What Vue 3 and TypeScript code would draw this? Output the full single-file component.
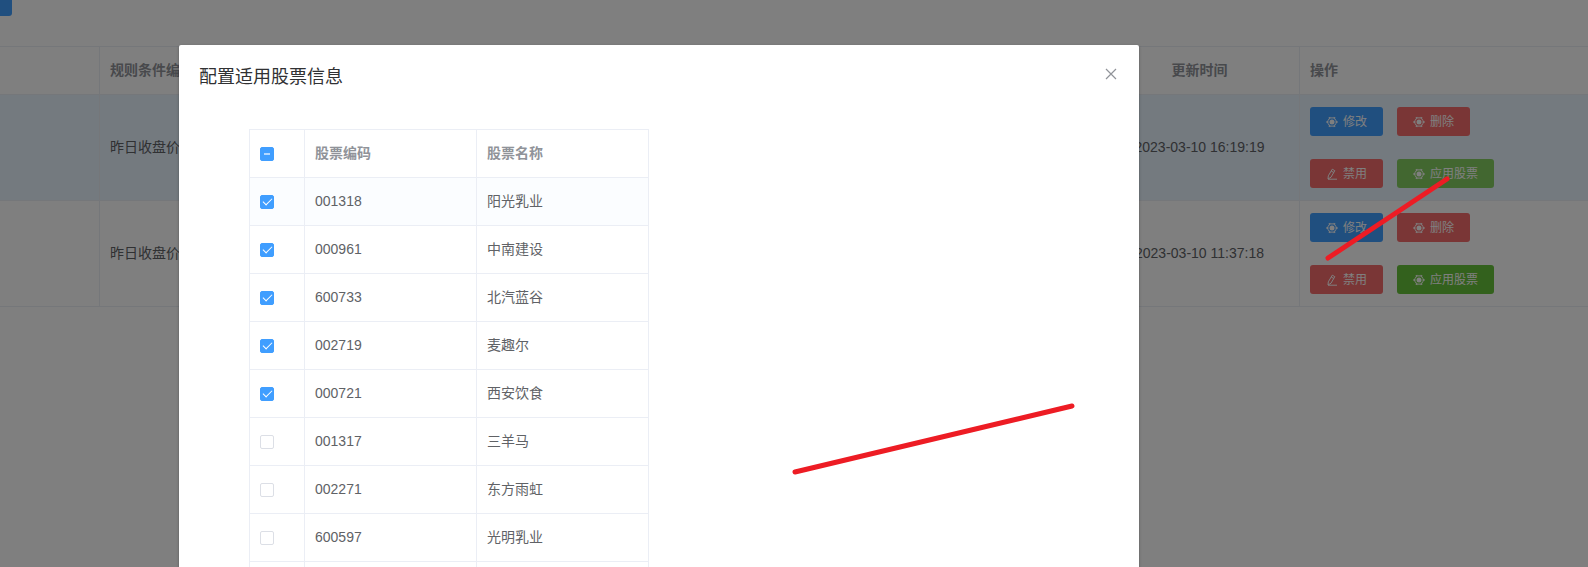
<script setup lang="ts">
import { ref, computed } from 'vue'

interface Action {
  label: string
  kind: 'primary' | 'danger' | 'success'
  icon: 'gear' | 'edit'
}

interface Rule {
  name: string
  updated: string
  current: boolean
}

interface Stock {
  code: string
  name: string
  checked: boolean
}

const actionRows: Action[][] = [
  [
    { label: '修改', kind: 'primary', icon: 'gear' },
    { label: '删除', kind: 'danger', icon: 'gear' },
  ],
  [
    { label: '禁用', kind: 'danger', icon: 'edit' },
    { label: '应用股票', kind: 'success', icon: 'gear' },
  ],
]

const rules = ref<Rule[]>([
  { name: '昨日收盘价', updated: '2023-03-10 16:19:19', current: true },
  { name: '昨日收盘价', updated: '2023-03-10 11:37:18', current: false },
])

const stocks = ref<Stock[]>([
  { code: '001318', name: '阳光乳业', checked: true },
  { code: '000961', name: '中南建设', checked: true },
  { code: '600733', name: '北汽蓝谷', checked: true },
  { code: '002719', name: '麦趣尔', checked: true },
  { code: '000721', name: '西安饮食', checked: true },
  { code: '001317', name: '三羊马', checked: false },
  { code: '002271', name: '东方雨虹', checked: false },
  { code: '600597', name: '光明乳业', checked: false },
  { code: '', name: '', checked: false },
])

const allChecked = computed(() => stocks.value.every((s) => s.checked))
const someChecked = computed(() => !allChecked.value && stocks.value.some((s) => s.checked))

function toggleAll(event: Event) {
  const on = (event.target as HTMLInputElement).checked
  stocks.value.forEach((s) => (s.checked = on))
}
</script>

<template>
  <div class="page">
    <div class="toolbar">
      <button type="button" class="tool" aria-label="新增"></button>
    </div>

    <table class="rules">
      <colgroup>
        <col class="c-first" />
        <col />
        <col class="c-time" />
        <col class="c-ops" />
      </colgroup>
      <thead>
        <tr>
          <th></th>
          <th>规则条件编码</th>
          <th class="time">更新时间</th>
          <th>操作</th>
        </tr>
      </thead>
      <tbody>
        <tr v-for="(rule, i) in rules" :key="i" :class="{ current: rule.current }">
          <td></td>
          <td>{{ rule.name }}</td>
          <td class="time">{{ rule.updated }}</td>
          <td>
            <div class="ops">
              <div v-for="(row, r) in actionRows" :key="r" class="pair">
                <button
                  v-for="action in row"
                  :key="action.label"
                  type="button"
                  class="btn"
                  :class="[action.kind, { focused: rule.current }]"
                >
                  <svg class="icon" viewBox="0 0 12 12" aria-hidden="true">
                    <template v-if="action.icon === 'gear'">
                      <circle cx="6" cy="6" r="4.2" class="ring" />
                      <path
                        d="M.5 6h1.300M10.200 6h1.300M3.250 1.240l.65 1.120M8.750 1.240l-.65 1.120M3.250 10.760l.65-1.120M8.750 10.760l-.65-1.120"
                        class="tooth"
                      />
                      <circle cx="6" cy="6" r="2.500" class="dot" />
                    </template>
                    <path
                      v-else
                      d="M6.300 1.200L8.800 2.700L5 9.200L2 11L2.300 7.800zM5.200 3L7.800 4.500M2 11.200h9"
                      class="ring"
                    />
                  </svg>
                  <span>{{ action.label }}</span>
                </button>
              </div>
            </div>
          </td>
        </tr>
      </tbody>
    </table>

    <div class="mask">
      <section class="dialog" role="dialog" aria-labelledby="dialog-title">
        <header class="dialog-head">
          <h2 id="dialog-title">配置适用股票信息</h2>
          <button type="button" class="close" aria-label="关闭">
            <svg viewBox="0 0 16 16" aria-hidden="true">
              <path d="M3 3l10 10M13 3L3 13" />
            </svg>
          </button>
        </header>
        <table class="stocks">
          <colgroup>
            <col class="c-check" />
            <col />
            <col />
          </colgroup>
          <thead>
            <tr>
              <th>
                <input
                  type="checkbox"
                  aria-label="全选"
                  :checked="allChecked"
                  :indeterminate="someChecked"
                  @change="toggleAll"
                />
              </th>
              <th>股票编码</th>
              <th>股票名称</th>
            </tr>
          </thead>
          <tbody>
            <tr v-for="(stock, i) in stocks" :key="i" :class="{ tinted: i === 0 }">
              <td><input v-model="stock.checked" type="checkbox" :aria-label="stock.name" /></td>
              <td>{{ stock.code }}</td>
              <td>{{ stock.name }}</td>
            </tr>
          </tbody>
        </table>
      </section>
    </div>

    <svg class="marks" aria-hidden="true">
      <path d="M1328 258L1447 179M795 472L1072 406" />
    </svg>
  </div>
</template>

<style>
html,
body,
#app {
  height: 100%;
  overflow: hidden;
}
</style>

<style scoped>
.page {
  position: relative;
  height: 100%;
  overflow: hidden;
  background: #fff;
  color: #606266;
  font-family: 'Liberation Sans', 'Noto Sans CJK SC', sans-serif;
  font-size: 14px;
}

.toolbar {
  height: 46px;
}

.tool {
  display: block;
  width: 12px;
  height: 16px;
  padding: 0;
  border: 0;
  border-radius: 0 0 3px 0;
  background: #409eff;
}

table {
  border-collapse: separate;
  border-spacing: 0;
  table-layout: fixed;
}

th,
td {
  box-sizing: border-box;
  padding: 0 10px;
  border-right: 1px solid #ebeef5;
  border-bottom: 1px solid #ebeef5;
  line-height: 23px;
  text-align: left;
  white-space: nowrap;
  overflow: hidden;
}

th {
  height: 48px;
  color: #909399;
  font-weight: 700;
}

.rules {
  width: 100%;
  border-top: 1px solid #ebeef5;
}

.rules td {
  height: 106px;
}

.rules th:last-child,
.rules td:last-child {
  border-right: 0;
}

.rules .time {
  text-align: center;
}

.c-first {
  width: 100px;
}

.c-time {
  width: 200px;
}

.c-ops {
  width: 288px;
}

.current td {
  background: #e8f4ff;
}

.ops {
  display: flex;
  flex-direction: column;
  gap: 23px;
}

.pair {
  display: flex;
  gap: 14px;
}

.btn {
  display: flex;
  align-items: center;
  gap: 5px;
  height: 29px;
  padding: 0 16px;
  border: 0;
  border-radius: 3px;
  color: #fff;
  font: inherit;
  font-size: 12px;
  line-height: 16px;
}

.primary {
  background: #409eff;
}

.danger {
  background: #f56c6c;
}

.success {
  background: #67c23a;
}

.success.focused {
  background: #85ce61;
}

.icon {
  width: 12px;
  height: 12px;
}

.ring,
.tooth {
  fill: none;
  stroke: currentColor;
  stroke-width: 1;
}

.tooth {
  stroke-width: 2;
}

.dot {
  fill: currentColor;
}

.mask {
  position: absolute;
  inset: 0;
  overflow: hidden;
  background: rgba(0, 0, 0, 0.5);
}

.dialog {
  min-height: 100%;
  margin: 45px 449px 0 179px;
  border-radius: 2px;
  background: #fff;
  box-shadow: 0 1px 3px rgba(0, 0, 0, 0.3);
}

.dialog-head {
  display: flex;
  align-items: flex-start;
  justify-content: space-between;
  padding: 20px 20px 0;
}

.dialog-head h2 {
  margin: 0;
  color: #303133;
  font-size: 18px;
  font-weight: 400;
  line-height: 24px;
}

.close {
  width: 16px;
  height: 18px;
  padding: 0;
  border: 0;
  background: none;
  color: #909399;
}

.close svg {
  display: block;
  width: 16px;
  height: 16px;
  fill: none;
  stroke: currentColor;
  stroke-width: 1.2;
}

.stocks {
  width: 400px;
  margin: 40px 0 0 70px;
  border-top: 1px solid #ebeef5;
  border-left: 1px solid #ebeef5;
}

.stocks td {
  height: 48px;
}

.c-check {
  width: 55px;
}

.tinted td {
  background: #fbfdff;
}

input {
  appearance: none;
  display: block;
  box-sizing: border-box;
  width: 14px;
  height: 14px;
  margin: 0;
  border: 1px solid #dcdfe6;
  border-radius: 2px;
  background: #fff;
}

input:checked,
input:indeterminate {
  border-color: #409eff;
  background: #409eff;
}

input:checked::after {
  content: '';
  display: block;
  box-sizing: border-box;
  width: 5px;
  height: 9px;
  margin: 0 0 0 4px;
  border: solid #fff;
  border-width: 0 1px 1px 0;
  transform: rotate(45deg);
}

input:indeterminate::after {
  content: '';
  display: block;
  width: 6px;
  height: 2px;
  margin: 5px 0 0 3px;
  background: #b3d8ff;
}

.marks {
  position: absolute;
  top: 0;
  left: 0;
  width: 100%;
  height: 100%;
  fill: none;
  stroke: #ed1c24;
  stroke-width: 5;
  stroke-linecap: round;
  pointer-events: none;
}
</style>
